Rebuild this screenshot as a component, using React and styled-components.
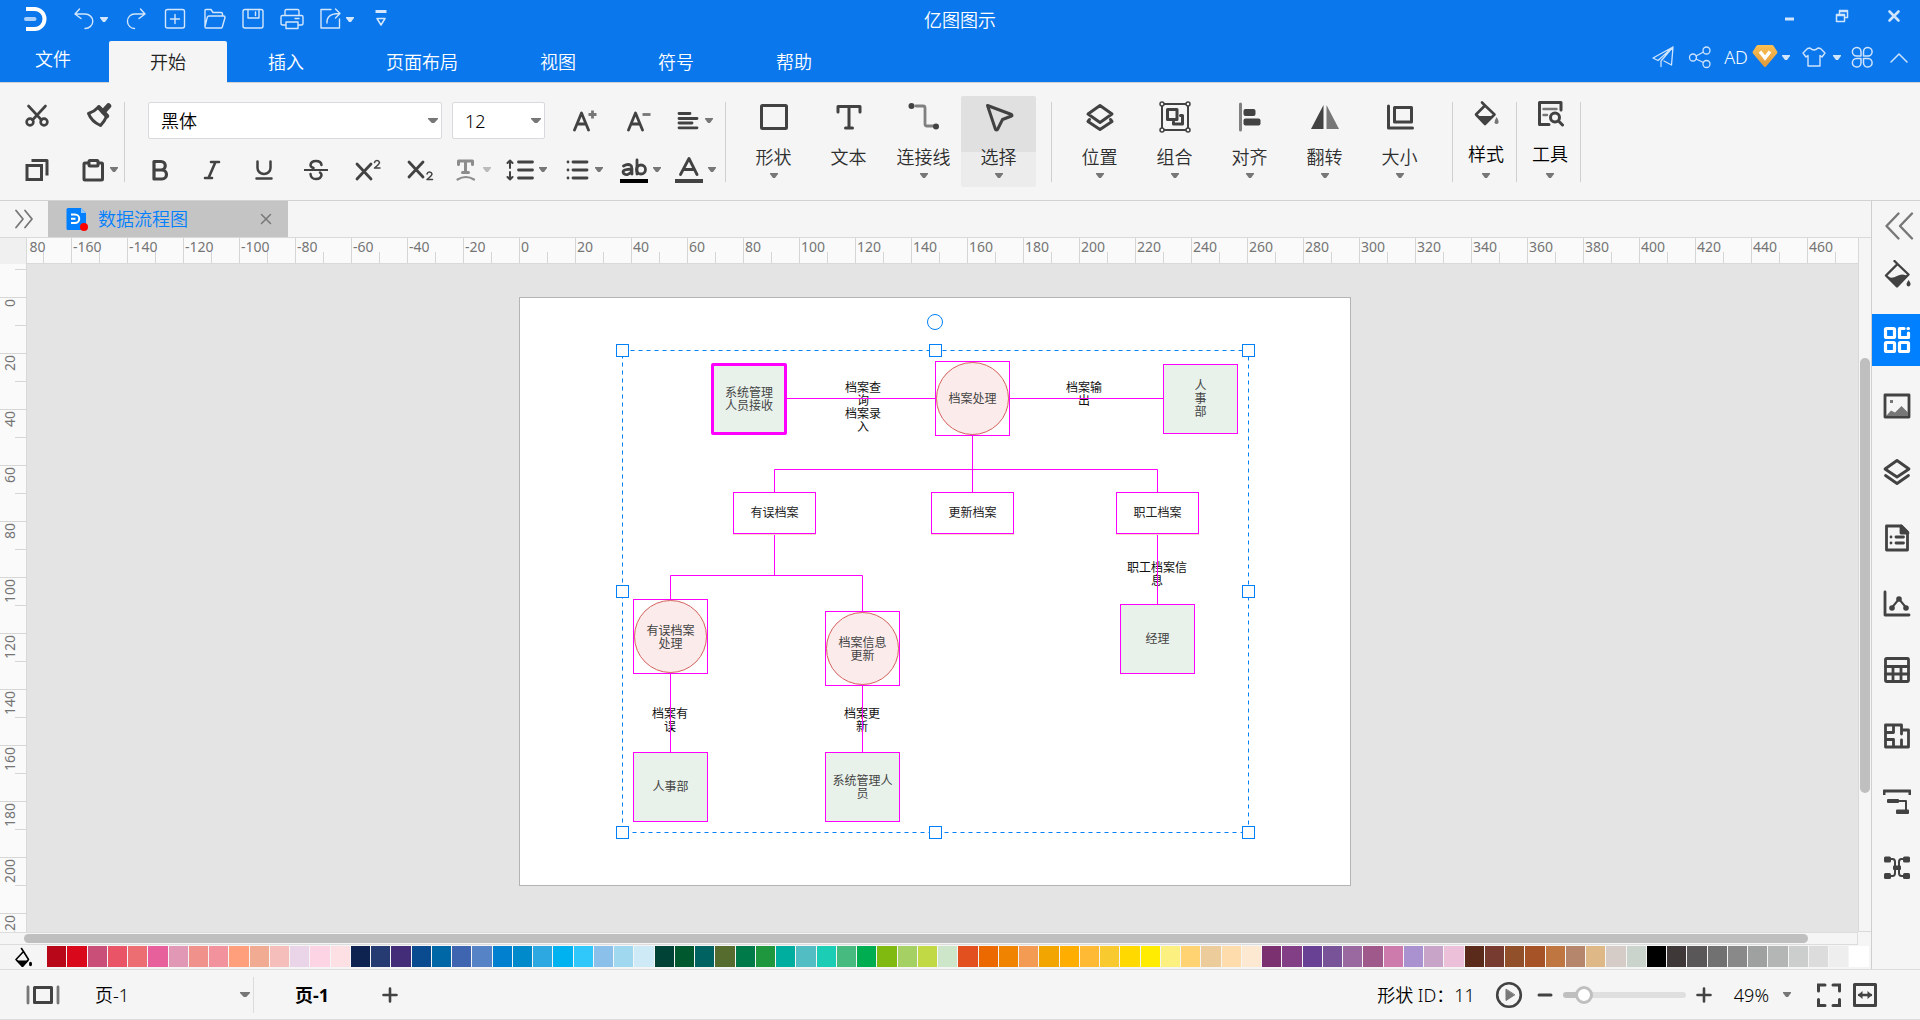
import React, { useState } from "react";
import styled, { createGlobalStyle, css } from "styled-components";

const GlobalStyle = createGlobalStyle`
  *, *::before, *::after { box-sizing: border-box; }
  body {
    margin: 0;
    background: #f5f5f5;
    color: #000;
    font: 350 18px/24px "Noto Sans", "Noto Sans CJK SC", sans-serif;
  }
  button, select, input { font: inherit; color: inherit; }
  button { border: 0; padding: 0; margin: 0; background: none; cursor: pointer; }
  svg { display: block; flex: none; }
`;

/* ---------- icons ---------- */

const Svg = ({ w = 24, h = w, sw = 2, fill = "none", children }) => (
  <svg width={w} height={h} viewBox={`0 0 ${w} ${h}`} fill={fill} stroke="currentColor" strokeWidth={sw}
    strokeLinecap="round" strokeLinejoin="round" aria-hidden="true">
    {children}
  </svg>
);
const solid = { fill: "currentColor", stroke: "none" };

const CaretSvg = styled.svg`
  fill: ${(p) => p.$color || "#777"};
`;
const Caret = ({ color, size = 8 }) => (
  <CaretSvg $color={color} width={size} height="5" viewBox="0 0 8 5" preserveAspectRatio="none" aria-hidden="true">
    <path d="M0 0h8v1L5 5H3L0 1z" />
  </CaretSvg>
);

const thin = 1.4;
const Logo = () => (
  <Svg sw={4}>
    <path d="M3 2h8.500a10 10 0 0 1 0 20H3" strokeLinecap="butt" />
    <path d="M3 12h8.500" stroke="#a9d0fa" />
  </Svg>
);
const Undo = () => (<Svg sw={thin}><path d="M7.500 3 3 8l6 4.500M3 8h10a7 6.500 0 0 1 0 14.500" transform="translate(0 -1)" /></Svg>);
const Redo = () => (<Svg sw={thin}><path d="M16.500 2 21 7l-6 4.500M21 7H10.500a7 7.200 0 0 0 0 14.500" /></Svg>);
const NewDoc = () => (<Svg sw={thin}><rect x="2.500" y="2.500" width="19" height="18.500" rx="2" /><path d="M12 7.500v9M7.500 12h9" /></Svg>);
const Folder = () => (
  <Svg sw={thin}><path d="M3 20V3.500q0-1 1-1h5l2 3h8q1.500 0 1.500 1.500v2M3 20q0 1 1 1h15q1 0 1.300-1L23 10.500q0-1.500-1.300-1.500H7q-1.300 0-1.700 1.200L3 19.500" /></Svg>
);
const Save = () => (<Svg sw={thin}><rect x="2" y="2.500" width="20" height="18.500" rx="2" /><path d="M7 2.500v8.500h11V2.500M14.500 5v3.500" /></Svg>);
const Printer = () => (
  <Svg sw={thin}><path d="M5 8.500V4q0-1.500 1.500-1.500h11Q19 2.500 19 4v4.500M5 18H2.500q-1.500 0-1.500-1.500v-6.500q0-1.500 1.500-1.500h19Q23 8.500 23 10v6.500q0 1.500-1.500 1.500H19M6 15h12v6.500H6zM15 11.500h4" /></Svg>
);
const ShareOut = () => (<Svg sw={thin}><path d="M13 2.500H3V21h18.500V12M9 16q-.5-9.500 12-9.500M17.500 2 22 6.500 17.500 11" /></Svg>);
const Customize = () => (<Svg sw={1.500}><path d="M6.500 4.500h11" strokeWidth="3" strokeLinecap="butt" /><path d="M8 11.500l4 6.500 4-6.500z" fill="none" /></Svg>);

const Minimize = () => (<Svg w={16}><path d="M3 11h9" strokeWidth="3" strokeLinecap="butt" /></Svg>);
const Restore = () => (
  <Svg w={16} sw={1.500}><path d="M5.500 6V2.500h8v7H10M5.500 3.500h8M2.500 6.500h8v7h-8zM2.500 7.500h8" strokeLinecap="butt" /></Svg>
);
const CloseWin = () => (<Svg w={16} sw={2.600}><path d="M3.500 3.500l9 9M12.500 3.500l-9 9" /></Svg>);

const Plane = () => (<Svg sw={1.300}><path d="M22 2 2 13l5 2.500L22 2l-1.500 18-7.500-4M10 21.500V16L22 2" /></Svg>);
const Share = () => (<Svg sw={1.300}><circle cx="5" cy="12.500" r="3.500" /><circle cx="18.500" cy="5.500" r="3.500" /><circle cx="18.500" cy="19" r="3.500" /><path d="M8 11l7.500-4M8 14l7.500 3.500" /></Svg>);
const Diamond = () => (
  <svg width="26" height="24" viewBox="0 0 26 24" aria-hidden="true">
    <defs><linearGradient id="gem" x1="0" y1="0" x2="0" y2="1"><stop offset="0" stopColor="#fbc052" /><stop offset="1" stopColor="#e0983c" /></linearGradient></defs>
    <path d="M6 0h14q1 0 1.500.800L25.200 6.500q.6 1-.2 2L14 21.500q-1 1-2 0L1 8.500q-.8-1-.2-2L4.500.800Q5 0 6 0z" fill="url(#gem)" />
    <path d="M8 6.500l5 6.500 5-6.500" fill="none" stroke="#fff" strokeWidth="3.400" />
  </svg>
);
const Shirt = () => (<Svg sw={1.400}><path d="M8 3q4 4 8 0l2.500.500L23 8l-3 4-2-1.500V21H6V10.500L4 12 1 8l4.500-4.500z" /></Svg>);
const Clover = () => (
  <Svg sw={1.500}>
    <path d="M11 11V6.500A4.300 4.300 0 1 0 6.500 11zM13.500 11H18A4.300 4.300 0 1 0 13.500 6.500zM11 13.500H6.500A4.300 4.300 0 1 0 11 18zM13.500 13.500V18A4.300 4.300 0 1 0 18 13.500z" />
  </Svg>
);
const ChevronUp = () => (<Svg sw={1.500}><path d="M4 17l8-8 8 8" /></Svg>);

const Scissors = () => (<Svg sw={2.600}><path d="M3.500 2 16.500 16M20.500 2l-13 14" /><circle cx="5" cy="18" r="3.400" /><circle cx="19" cy="18" r="3.400" /></Svg>);
const Brush = () => (
  <Svg w={26} sw={3}>
    <path d="M12.500 4Q8.500 8.500 2.500 10.500 5.500 18.500 14.500 22.500q4.500-5 6-9z" />
    <path d="M13 4.500l8 8.500" strokeWidth="4.500" /><path d="M17.500 8.500l5-5.500" strokeWidth="5.500" />
  </Svg>
);
const Copy = () => (<Svg sw={3}><path d="M2 7.500h14.500v14H2z" strokeLinejoin="miter" /><path d="M6.500 2.500h15.500v15" strokeLinecap="butt" /></Svg>);
const Paste = () => (<Svg sw={3}><rect x="3" y="5" width="18.500" height="17" rx="1" /><rect x="8" y="2.500" width="9" height="5.500" rx="1" fill="#f5f5f5" /></Svg>);
const FontUp = () => (<Svg sw={2.800}><path d="M1.500 21 8.500 4l7 17M4.500 15h8" /><path d="M15.500 5.500h8M19.500 1.500v8" stroke="#777" strokeLinecap="butt" /></Svg>);
const FontDown = () => (<Svg sw={2.800}><path d="M1.500 21 8.500 4l7 17M4.500 15h8" /><path d="M15.500 5.500h8" stroke="#777" strokeLinecap="butt" /></Svg>);
const AlignText = () => (<Svg sw={2.800}><path d="M3 4.500h11M3 9.500h18M3 14h13M3 18.800h18" /></Svg>);
const Bold = () => (<Svg sw={3.200}><path d="M6 3.500h7a4 4 0 0 1 0 8.500H6zM6 12h8a4.300 4.300 0 0 1 0 9H6z" /></Svg>);
const Italic = () => (<Svg sw={2.600}><path d="M11 4h8M5 20h7M15.500 4l-7 16" /></Svg>);
const Underline = () => (<Svg sw={2.500}><path d="M5.500 3.500V10a6.500 6 0 0 0 13 0V3.500M4.500 20.500h15" /></Svg>);
const Strike = () => (<Svg sw={2.500}><path d="M17.500 7q-.5-4-5.500-4T6.500 7q0 2 3 3M6.500 16q.5 5 5.500 5t5.500-4q0-1.500-1.500-2.500" /><path d="M.5 12h23" strokeWidth="2" /></Svg>);
const Sup = () => (<Svg w={28} h={24} sw={2.800}><path d="M3 6l14 15M17 6 3 21" /><path d="M20.500 4.500q.5-2 2.500-2t2.500 2q0 1.500-5 5.500h5.500" strokeWidth="1.500" /></Svg>);
const Sub = () => (<Svg w={28} h={24} sw={2.800}><path d="M3 4l14 15M17 4 3 19" /><path d="M21 16q.5-2 2.500-2t2.500 2q0 1.500-5 5.500h5.500" strokeWidth="1.500" /></Svg>);
const TextArc = () => (<Svg sw={3} ><g stroke="#8c8c8c"><path d="M4.500 6.500V3h14v3.500M11.500 3v11M8.500 14.500h6" strokeWidth="3" /><path d="M3.500 21.500q8.500-5 16.500 0" strokeWidth="2.200" /></g></Svg>);
const LineSpacing = () => (<Svg w={28} h={24} sw={2.800}><path d="M12.500 4h14M12.500 12h14M12.500 20h14" /><path d="M4 2.500v7.500M4 14v7.500M1.500 5 4 2.500 6.500 5M1.500 19 4 21.500 6.500 19" strokeWidth="2" /></Svg>);
const Bullets = () => (<Svg sw={2.800}><path d="M7 4h14M7 12h14M7 20h14" /><path d="M2 4h.01M2 12h.01M2 20h.01" /></Svg>);
const Highlight = () => (
  <Svg w={28} h={26} sw={2.800}>
    <path d="M3.500 9q4.500-2.800 7.500-.5 1 1 1 8.500M12 12q-9 .3-9 3 1 3.500 5 2.300 4-1.500 4-5.300M17 3v14" />
    <circle cx="21" cy="12.500" r="4.500" /><path d="M0 22h28v4H0z" fill="#000" stroke="none" />
  </Svg>
);
const FontColor = () => (<Svg w={28} h={26} sw={2.800}><path d="M5.500 17.500 14 1.500l8 16M8.500 12.500h11" /><path d="M0 22h28v4H0z" {...solid} /></Svg>);

const ShapeIcon = () => (<Svg w={32} sw={3}><rect x="3.500" y="4.500" width="25" height="23" rx="1" /></Svg>);
const TextIcon = () => (<Svg w={32} sw={3}><path d="M5 11V5.500h22V11M16 5.500v21M12.500 27h7" /></Svg>);
const ConnectorIcon = () => (
  <Svg w={32} sw={2.800}><path d="M8 5h7q2 0 2 2v16q0 2 2 2h7" stroke="#808080" /><circle cx="3.500" cy="5" r="3" {...solid} /><circle cx="28" cy="25.500" r="3" {...solid} /></Svg>
);
const SelectIcon = () => (<Svg w={32} sw={3}><path d="M4.500 4.500 28.500 13.500q1 1 0 1.500l-9 3.500-5 10q-1 1-2 0z" /></Svg>);
const LayerIcon = () => (<Svg w={32} sw={3}><path d="M16 4.500 28 13l-12 8.500L4 13zM5.500 18.500 4 20.500l12 8 12-8-1.500-2" /></Svg>);
const GroupIcon = () => (
  <Svg w={32} sw={2}>
    <path d="M3 3h26v26H3z" />
    <g fill="#f5f5f5" strokeWidth="1.500"><circle cx="3" cy="3" r="2" /><circle cx="29" cy="3" r="2" /><circle cx="3" cy="29" r="2" /><circle cx="29" cy="29" r="2" /></g>
    <path d="M8.500 8.500h9.500v10H8.500zM21.500 14.500h2v8.500h-9v-2" strokeWidth="3" />
  </Svg>
);
const AlignIcon = () => (<Svg w={32}><path d="M6.500 3v26" stroke="#808080" strokeWidth="3" /><rect x="9.500" y="8" width="12" height="7" rx="2" {...solid} /><rect x="9.500" y="17.500" width="17" height="7" rx="2" {...solid} /></Svg>);
const FlipIcon = () => (<Svg w={32}><path d="M14.500 4v24H2z" {...solid} /><path d="M17.500 4v24H30z" fill="#777" stroke="none" /></Svg>);
const SizeIcon = () => (<Svg w={32} sw={3}><path d="M4.500 5v22h24" /><path d="M10.500 6.500h17v14.500h-17z" /></Svg>);
const FillIcon = () => (
  <Svg w={28} sw={2.600}><path d="M10 2.500l3 3M13 5.500 4 14.500l9 9.500 9.500-9.500z" /><path d="M5 16h17L13 25z" {...solid} /><path d="M24.500 17q2.500 3.500 2 5.500-.5 1.500-2 1.500t-2-1.500q0-2 2-5.500z" fill="#777" stroke="none" /></Svg>
);
const ToolsIcon = () => (
  <Svg w={28} sw={3}><path d="M25 10V2.500H3.500v22H13" /><path d="M7.500 9h13M7.500 15h3.500" stroke="#777" strokeWidth="2.500" /><circle cx="19" cy="17.500" r="4.500" /><path d="M22.500 21l4 4" /></Svg>
);

const ChevronsRight = () => (<Svg w={20} sw={1.800}><path d="M2 1.500 9 10l-7 8.500M11 1.500 18 10l-7 8.500" /></Svg>);
const DocIcon = () => (
  <svg width="22" height="24" viewBox="0 0 22 24" aria-hidden="true">
    <path d="M2 1h13l5 5v17H2q-1.500 0-1.500-1.500v-19Q.5 1 2 1z" fill="#0080ff" /><path d="M15 1l5 5h-5z" fill="#8cc6ff" />
    <path d="M5 7.500h4a4.200 4.200 0 0 1 0 8.500H5M5 11.800h4.500" fill="none" stroke="#fff" strokeWidth="2" />
    <circle cx="18" cy="20" r="4" fill="#f00" />
  </svg>
);
const CloseTab = () => (<Svg w={12} sw={1.500}><path d="M1.500 1.500l9 9M10.500 1.500l-9 9" /></Svg>);

const ChevronsLeft = () => (<Svg w={30} sw={2.400}><path d="M14.500 2.500 2.500 15l12 12.500M28 2.500 16 15l12 12.500" /></Svg>);
const SideFill = () => (
  <Svg w={28} sw={2.400}><path d="M11.500 1l3 3M14.500 4 3 15.500 14 26.500l11.500-12z" /><path d="M4 16.500q5 2.500 10-.5t11 0L14 27z" {...solid} /><path d="M25.500 20q2.500 3 2 4.500-.5 2-2 2t-2-2q0-1.500 2-4.500z" {...solid} /></Svg>
);
const SideGrid = () => (
  <Svg w={28} sw={3.200}><rect x="2.500" y="2.500" width="9" height="9" rx="1" /><rect x="2.500" y="16.500" width="9" height="9" rx="1" /><rect x="16.500" y="16.500" width="9" height="9" rx="1" /><path d="M21 2.500h-4.500v9h9V7M25 2.500h.5" /></Svg>
);
const SideImage = () => (<Svg w={28} sw={2.800}><path d="M2 3h24v22H2z" /><path d="M4 23l4-4.500 4 2 6.500-6.500 6.500 6.500V24H4zM7 8h3v3H7z" fill="#777" stroke="none" /></Svg>);
const SideLayers = () => (<Svg w={28} sw={2.800}><path d="M14 2.500l12 8.500-12 8L2 11zM2.500 17.500l11.500 8 11.500-8" /></Svg>);
const SideDoc = () => (<Svg w={28} sw={2.800}><path d="M3.500 2h15l6 6v18h-21z" /><path d="M18 2v7h7z" fill="currentColor" /><path d="M8 13h.01M8 19h.01M13 13h7.500M13 19h7.500" /></Svg>);
const SideChart = () => (<Svg w={28} sw={2.800}><path d="M2 2v23h24" /><path d="M9 17.500 16 9l7 8.500" strokeWidth="2" /><circle cx="9" cy="18" r="2.800" {...solid} /><circle cx="16" cy="9" r="2.800" {...solid} /><circle cx="23" cy="18" r="2.800" {...solid} /></Svg>);
const SideTable = () => (<Svg w={28} sw={2.800}><rect x="2.500" y="2.500" width="23" height="23" rx="1" /><path d="M2.500 10.500h23M2.500 18h23M10 10.500v15M18 10.500v15" /></Svg>);
const SidePlan = () => (<Svg w={28} sw={2.800}><path d="M2.500 3h16v5h7v17h-23zM10.500 3v7.500h-8M18.500 8v4M2.500 17.500h8V25M18.500 25v-7" /></Svg>);
const SideFlow = () => (<Svg w={28} sw={2}><path d="M1 7V3h26v4" strokeWidth="3" strokeLinecap="butt" /><path d="M15 13h8v10" /><rect x="4" y="11" width="12" height="4" rx="1" {...solid} /><rect x="13" y="21.500" width="13" height="4.500" rx="1" {...solid} /></Svg>);
const SideMind = () => (
  <Svg w={28} sw={2}><path d="M7 5h2.500Q12 5 12 8v11q0 3-2.500 3H7M21 5h-2.500Q16 5 16 8v11q0 3 2.500 3H21" />
    <g {...solid}><rect x="1" y="2.500" width="7" height="6" rx="1.500" /><rect x="20" y="2.500" width="7" height="6" rx="1.500" /><rect x="1" y="19" width="7" height="6" rx="1.500" /><rect x="20" y="19" width="7" height="6" rx="1.500" /><rect x="10" y="11.500" width="8" height="4.500" rx="1" /></g></Svg>
);

const PaletteFill = () => (<Svg w={20} sw={1.600}><path d="M8.500 1.500l2 3L3 12.500l6.500 7 6-7-5-8" /><path d="M3 13.500h13L9.500 20z" {...solid} /><ellipse cx="17.500" cy="17" rx="1.500" ry="2.200" {...solid} /></Svg>);
const PagesIcon = () => (<Svg w={34} h={20} sw={3}><path d="M8.500 2.500h17v15h-17z" /><path d="M2 2v16M32 2v16" stroke="#777" strokeWidth="2.800" /></Svg>);
const PlusIcon = () => (<Svg w={16} sw={2.600}><path d="M8 1.500v13M1.500 8h13" /></Svg>);
const MinusIcon = () => (<Svg w={16} sw={3}><path d="M2 8h12" /></Svg>);
const PlayIcon = () => (<Svg w={28} sw={2.600}><circle cx="14" cy="14" r="11.800" /><path d="M11 8.500v11l8.500-5.500z" fill="#777" stroke="#777" strokeWidth="1" /></Svg>);
const FullIcon = () => (<Svg w={26} sw={3}><path d="M9 3H2.500v6M17 3h6.500v6M9 23.500H2.500v-6M17 23.500h6.500v-6" strokeLinejoin="miter" /></Svg>);
const FitIcon = () => (<Svg w={26} sw={3}><path d="M2.500 2.500h21v21h-21z" /><path d="M7 13h12" strokeWidth="2.400" /><path d="M10.500 9v8L6 13zM15.500 9v8l4.500-4z" {...solid} /></Svg>);

/* ---------- header ---------- */

const Shell = styled.div`
  display: flex;
  flex-direction: column;
  min-height: 100vh;
`;
const Header = styled.header`
  background: #0a77ec;
  color: #fff;
  border-bottom: 1px solid #d2d2d2;
`;
const TitleBar = styled.div`
  display: grid;
  grid-template-columns: 1fr auto 1fr;
  height: 41px;
`;
const QuickAccess = styled.div`
  display: flex;
  align-items: center;
  height: 38px;
  padding-left: 23px;
  color: #d3e6fc;
`;
const LogoMark = styled.span`
  color: #fff;
  margin-right: 16px;
`;
const BarButton = styled.button`
  display: flex;
  align-items: center;
  justify-content: center;
  gap: ${(p) => p.$gap || 4}px;
  width: ${(p) => p.$w || 39}px;
  height: 32px;
`;
const Title = styled.h1`
  margin: 0;
  font-size: 18px;
  font-weight: 350;
  line-height: 40px;
`;
const WindowButtons = styled.div`
  display: flex;
  justify-content: flex-end;
  color: #cfe4fd;
`;
const MenuRow = styled.div`
  display: flex;
  justify-content: space-between;
  height: 41px;
`;
const Menu = styled.nav`
  display: flex;
`;
const MenuTab = styled.button`
  height: 41px;
  padding: 0 41px;
  border-radius: 2px 2px 0 0;
  ${(p) => p.$active && css`
    background: #f5f5f5;
    color: #222;
    margin-bottom: -1px;
    height: 42px;
  `}
`;
const FileTab = styled.button`
  width: 109px;
  height: 35px;
  padding-right: 3px;
`;
const Account = styled.div`
  display: flex;
  color: #cfe4fd;
`;
const UserName = styled.span`
  color: #fff;
`;

/* ---------- ribbon ---------- */

const Ribbon = styled.section`
  display: flex;
  align-items: flex-start;
  height: 118px;
  border-bottom: 1px solid #d2d2d2;
  color: #424242;
`;
const Separator = styled.i`
  width: 1px;
  height: 80px;
  margin: 19px ${(p) => p.$after || 0}px 0 ${(p) => p.$before || 0}px;
  background: #cfcfcf;
`;
const ClipboardGroup = styled.div`
  display: grid;
  grid-template-columns: 50px 50px;
  gap: 17px 12px;
  padding: 14px 0 0 12px;
`;
const FontGroup = styled.div`
  display: flex;
  flex-direction: column;
  gap: 12px;
  padding: 19px 0 0 9px;
`;
const FontRow = styled.div`
  display: flex;
  padding-left: ${(p) => (p.$inset ? 14 : 0)}px;
`;
const IconButton = styled.button`
  display: flex;
  align-items: center;
  justify-content: center;
  gap: 5px;
  width: ${(p) => p.$w || 50}px;
  height: 37px;
`;
const SelectBox = styled.label`
  position: relative;
  display: flex;
  align-items: center;
  width: ${(p) => p.$w}px;
  margin-right: ${(p) => p.$gap}px;
  ${CaretSvg} {
    position: absolute;
    right: 4px;
    pointer-events: none;
  }
`;
const Select = styled.select`
  appearance: none;
  width: 100%;
  height: 37px;
  padding: 0 13px 0 12px;
  border: 1px solid #d9d9df;
  border-radius: 2px;
  background: #fff;
  color: #000;
`;
const ToolButton = styled.button`
  display: flex;
  flex-direction: column;
  align-items: center;
  width: ${(p) => (p.$compact ? 63 : 75)}px;
  height: 91px;
  margin-top: 13px;
  padding: ${(p) => (p.$compact ? "2px 0 0 3px" : "5px 0 0")};
  border-radius: 2px;
  color: ${(p) => (p.$compact ? "#000" : "#2e2e2e")};
  background: ${(p) => (p.$active ? "linear-gradient(#e0e0e0 56px, #ececec 56px)" : "none")};
`;
const ToolIcon = styled.span`
  display: flex;
  align-items: center;
  height: 32px;
  margin-bottom: 12px;
  color: #424242;
`;
const ToolCaret = styled.span`
  height: 5px;
  margin-top: ${(p) => (p.$compact ? 7 : 4)}px;
  visibility: ${(p) => (p.$hidden ? "hidden" : "visible")};
`;

/* ---------- workspace ---------- */

const Main = styled.main`
  display: flex;
  flex: 1;
`;
const Workspace = styled.div`
  display: flex;
  flex-direction: column;
  flex: 1;
  min-width: 0;
`;
const DocBar = styled.div`
  display: flex;
  height: 37px;
  border-bottom: 1px solid #d9d9d9;
  color: #777;
`;
const DocExpand = styled.button`
  display: grid;
  place-items: center;
  width: 48px;
`;
const DocTab = styled.div`
  display: flex;
  align-items: center;
  gap: 10px;
  width: 240px;
  padding: 0 16px 0 18px;
  background: #c4c4c4;
`;
const DocName = styled.button`
  flex: 1;
  text-align: left;
  color: #0080ff;
`;
const Editor = styled.div`
  display: grid;
  flex: 1;
  grid-template-columns: 27px minmax(0, 1fr) 13px;
  grid-template-rows: 26px minmax(0, 1fr);
`;
const Corner = styled.div`
  background: #f0f0f0;
  border-right: 1px solid #d9d9d9;
`;
const RulerX = styled.div`
  display: flex;
  overflow: hidden;
  background: #fafafa;
  border-bottom: 1px solid #d9d9d9;
  > :first-child { margin-left: -12px; }
`;
const RulerY = styled.div`
  position: relative;
  overflow: hidden;
  background: #fafafa;
  border-right: 1px solid #d9d9d9;
`;
const RulerYScale = styled.div`
  position: absolute;
  top: -23px;
  left: 0;
  right: 0;
`;
const markText = css`
  color: #757575;
  font-size: 14px;
  font-weight: 400;
`;
const MarkX = styled.span`
  ${markText}
  flex: none;
  width: 56px;
  padding-left: 1px;
  line-height: 17px;
  border-left: 1px solid #d6d6d6;
  background: linear-gradient(#d6d6d6, #d6d6d6) 27px 100% / 1px 11px no-repeat;
`;
const MarkY = styled.div`
  ${markText}
  height: 56px;
  padding-top: 1px;
  line-height: 20px;
  border-top: 1px solid #d6d6d6;
  background: linear-gradient(#d6d6d6, #d6d6d6) 100% 27px / 11px 1px no-repeat;
  span {
    display: block;
    width: 20px;
    writing-mode: vertical-rl;
    transform: rotate(180deg);
  }
`;
const ScrollY = styled.div`
  grid-column: 3;
  grid-row: 1 / 3;
  padding: 120px 1px 0;
  border-left: 1px solid #d9d9d9;
  border-bottom: 1px solid #d9d9d9;
  background: #f5f5f5;
  &::before {
    content: "";
    display: block;
    height: 76%;
    border-radius: 5px;
    background: #bfbfbf;
  }
`;
const ScrollX = styled.div`
  height: 13px;
  margin-right: 13px;
  padding: 1px 49px 1px 24px;
  border: solid #dcdcdc;
  border-width: 1px 1px 1px 0;
  background: #f5f5f5;
  &::before {
    content: "";
    display: block;
    height: 9px;
    border-radius: 5px;
    background: #bfbfbf;
  }
`;
const Canvas = styled.div`
  position: relative;
  overflow: hidden;
  min-height: 660px;
  background: #e4e4e4;
`;
const Page = styled.div`
  position: absolute;
  left: 493px;
  top: 34px;
  width: 830px;
  height: 587px;
  background: #fff;
  box-shadow: 0 0 0 1px #b4b4b4;
`;
const diagramText = css`
  font: 400 12px/13px "Noto Sans CJK SC", sans-serif;
  text-align: center;
  white-space: pre-line;
`;
const Node = styled.div`
  ${diagramText}
  position: absolute;
  display: grid;
  place-items: center;
  left: ${(p) => p.$x}px;
  top: ${(p) => p.$y}px;
  width: ${(p) => p.$w}px;
  height: ${(p) => p.$h}px;
  padding-bottom: 3px;
  border: ${(p) => (p.$key ? 3 : 1)}px solid #f0f;
  border-radius: ${(p) => (p.$key ? 2 : 0)}px;
  color: #444;
  background: #e8f1ea;
  ${(p) => p.$kind === "box" && css`
    color: #222;
    background: #fff;
    box-shadow: 0 1px #f3dcc4;
  `}
  ${(p) => p.$kind === "circle" && css`
    padding-bottom: 0;
    background: #fff;
  `}
`;
const Disc = styled.div`
  display: grid;
  place-items: center;
  width: 100%;
  height: 100%;
  padding-bottom: 2px;
  border: 1px solid #d4605c;
  border-radius: 50%;
  background: #fbebea;
`;
const LinkLabel = styled.div`
  ${diagramText}
  position: absolute;
  left: ${(p) => p.$x - 40}px;
  top: ${(p) => p.$y}px;
  width: 80px;
  color: #111;
`;
const Layer = styled.svg`
  position: absolute;
  inset: 0;
`;
const PaletteBar = styled.div`
  display: flex;
  height: 24px;
  padding: 1px 1px 1px 13px;
`;
const PaletteButton = styled.button`
  width: 34px;
`;
const Swatches = styled.div`
  display: flex;
  flex: 1;
`;
const Swatch = styled.button`
  flex: 1;
  height: 21px;
  border-right: 1px solid #f5f5f5;
  background: ${(p) => p.$color};
`;

const Sidebar = styled.aside`
  display: flex;
  flex-direction: column;
  width: 49px;
  border-left: 1px solid #cfcfcf;
  color: #424242;
`;
const Collapse = styled.button`
  display: grid;
  place-items: start center;
  height: 47px;
  padding: 10px 0 0 6px;
  color: #777;
`;
const SideButton = styled.button`
  display: grid;
  place-items: center;
  height: 52px;
  margin-bottom: 14px;
  padding-left: 1px;
  ${(p) => p.$active && css`
    background: #0080ff;
    color: #fff;
  `}
`;

/* ---------- status bar ---------- */

const StatusBar = styled.footer`
  display: flex;
  align-items: center;
  height: 51px;
  padding-right: 37px;
  border: solid #dcdcdc;
  border-width: 1px 0;
  color: #424242;
`;
const StatusButton = styled.button`
  display: grid;
  place-items: center;
  width: ${(p) => p.$w}px;
  height: 36px;
`;
const PageSelect = styled.select`
  appearance: none;
  width: 100%;
  padding: 0 10px;
  height: 36px;
  border: 0;
  border-right: 1px solid #dcdcdc;
  background: none;
  color: #000;
`;
const PageTab = styled.button`
  margin-left: 41px;
  font-weight: 700;
  color: #000;
`;
const StatusText = styled.span`
  margin-left: auto;
  margin-right: 14px;
  color: #000;
`;
const ZoomButton = styled.button`
  display: flex;
  align-items: center;
  gap: 14px;
  margin: 0 20px 0 14px;
  color: #000;
`;
const ZoomRange = styled.input`
  appearance: none;
  width: 123px;
  height: 6px;
  margin: 0 2px;
  border-radius: 3px;
  background: linear-gradient(90deg, #bfbfbf 18px, #dfdfdf 18px);
  &::-webkit-slider-thumb {
    appearance: none;
    width: 18px;
    height: 18px;
    border: 3px solid #bfbfbf;
    border-radius: 50%;
    background: #fff;
  }
`;

/* ---------- data ---------- */

const TABS = ["开始", "插入", "页面布局", "视图", "符号", "帮助"];
const TOOLS = [
  ["形状", ShapeIcon], ["文本", TextIcon, true], ["连接线", ConnectorIcon], ["选择", SelectIcon],
];
const ARRANGE = [
  ["位置", LayerIcon], ["组合", GroupIcon], ["对齐", AlignIcon], ["翻转", FlipIcon], ["大小", SizeIcon],
];
const SIDE = [
  ["填充", SideFill], ["符号库", SideGrid], ["图片", SideImage], ["图层", SideLayers], ["文档", SideDoc],
  ["图表", SideChart], ["表格", SideTable], ["平面图", SidePlan], ["流程", SideFlow], ["思维导图", SideMind],
];
const MARKS_X = Array.from({ length: 33 }, (_, i) => -180 + i * 20);
const MARKS_Y = Array.from({ length: 13 }, (_, i) => -20 + i * 20);

const NODES = [
  { x: 191, y: 65, w: 76, h: 72, text: "系统管理\n人员接收", main: true },
  { x: 415, y: 63, w: 75, h: 75, text: "档案处理", kind: "circle" },
  { x: 643, y: 66, w: 75, h: 70, text: "人\n事\n部" },
  { x: 213, y: 194, w: 83, h: 42, text: "有误档案", kind: "box" },
  { x: 411, y: 194, w: 83, h: 42, text: "更新档案", kind: "box" },
  { x: 596, y: 194, w: 83, h: 42, text: "职工档案", kind: "box" },
  { x: 113, y: 301, w: 75, h: 75, text: "有误档案\n处理", kind: "circle" },
  { x: 305, y: 313, w: 75, h: 75, text: "档案信息\n更新", kind: "circle" },
  { x: 600, y: 306, w: 75, h: 70, text: "经理" },
  { x: 113, y: 454, w: 75, h: 70, text: "人事部" },
  { x: 305, y: 454, w: 75, h: 70, text: "系统管理人\n员" },
];
const LABELS = [
  [343, 82, "档案查\n询"], [343, 108, "档案录\n入"], [564, 82, "档案输\n出"],
  [637, 262, "职工档案信\n息"], [150, 408, "档案有\n误"], [342, 408, "档案更\n新"],
];
const HANDLES = [
  [102, 52], [415, 52], [728, 52], [102, 293], [728, 293], [102, 534], [415, 534], [728, 534],
];
const COLORS = (
  "b70718 d9091b c94f78 e95466 ec6d72 e75f9b e198b5 f0918c f2929c ff9f7c f0ab92 f6bebb ead5e8 fdd4e3 fde0e4 " +
  "0f2350 253b71 432d78 0a4a8f 0067a6 4065b0 5583c5 0080cf 008acc 2ea8e0 00b2ef 30c8fa 8bc0ea 9fd8ef ceeaf6 " +
  "004236 00582f 006362 566c2e 007a48 1f973f 00ae9f 52bec4 1acdb4 47bb7f 00ae51 80b910 a4d064 c0d944 cde6c9 " +
  "e2501f ec6900 f08300 f39a53 f2a500 ffae00 ffba35 f9c930 ffd900 ffec00 fcf080 ffd372 ebcc9a ffdcac fde8d1 " +
  "7b3070 833f85 684195 785397 9969a0 9f598a cd7bad aa91cf c8a4c9 ecc0d9 " +
  "5a2a1b 773b30 91502a a65427 c07640 b5856c dfb887 d5ccc8 cad4cd " +
  "000000 3f3838 595757 717171 898989 9fa0a0 b4b5b5 cccdcd dcdcdc eeeeee ffffff"
).split(" ");

/* ---------- parts ---------- */

const Tool = ({ label, icon: Icon, compact, active, plain, onClick }) => (
  <ToolButton $compact={compact} $active={active} onClick={onClick}>
    <ToolIcon><Icon /></ToolIcon>
    {label}
    <ToolCaret $compact={compact} $hidden={plain}><Caret /></ToolCaret>
  </ToolButton>
);

const Diagram = () => (
  <Page>
    {LABELS.map(([x, y, text]) => <LinkLabel key={text} $x={x} $y={y}>{text}</LinkLabel>)}
    <Layer width="831" height="587" fill="none" stroke="#f0f">
      <path d="M267 100.500H415M490 100.500H643M452.500 138V194M254.500 194V171.500H637.500V194M254.500 236V277.500M150.500 301V277.500H342.500V313M150.500 376V454M342.500 388V454M637.500 236V306" />
    </Layer>
    {NODES.map((n) => (
      <Node key={`${n.x}-${n.y}`} $x={n.x} $y={n.y} $w={n.w} $h={n.h} $kind={n.kind} $key={n.main}>
        {n.kind === "circle" ? <Disc>{n.text}</Disc> : n.text}
      </Node>
    ))}
    <Layer width="831" height="587" fill="none" stroke="#0080f8">
      <rect x="102.500" y="52.500" width="626" height="482" strokeDasharray="4 4" />
      <g fill="#fff">
        {HANDLES.map(([x, y]) => <rect key={`${x}-${y}`} x={x - 5.5} y={y - 5.5} width="12" height="12" />)}
        <circle cx="415" cy="24" r="7.500" />
      </g>
    </Layer>
  </Page>
);

export default function App() {
  const [tab, setTab] = useState("开始");
  const [tool, setTool] = useState("选择");
  const [panel, setPanel] = useState("符号库");
  const [zoom, setZoom] = useState(12);

  return (
    <Shell>
      <GlobalStyle />
      <Header>
        <TitleBar>
          <QuickAccess>
            <LogoMark><Logo /></LogoMark>
            <BarButton $w={53} aria-label="撤销"><Undo /><Caret color="#d3e6fc" /></BarButton>
            <BarButton aria-label="重做"><Redo /></BarButton>
            <BarButton aria-label="新建"><NewDoc /></BarButton>
            <BarButton aria-label="打开"><Folder /></BarButton>
            <BarButton aria-label="保存"><Save /></BarButton>
            <BarButton aria-label="打印"><Printer /></BarButton>
            <BarButton $w={50} aria-label="导出"><ShareOut /><Caret color="#d3e6fc" /></BarButton>
            <BarButton aria-label="自定义"><Customize /></BarButton>
          </QuickAccess>
          <Title>亿图图示</Title>
          <WindowButtons>
            <BarButton $w={52} aria-label="最小化"><Minimize /></BarButton>
            <BarButton $w={52} aria-label="还原"><Restore /></BarButton>
            <BarButton $w={52} aria-label="关闭"><CloseWin /></BarButton>
          </WindowButtons>
        </TitleBar>
        <MenuRow>
          <Menu>
            <FileTab>文件</FileTab>
            {TABS.map((t) => <MenuTab key={t} $active={t === tab} onClick={() => setTab(t)}>{t}</MenuTab>)}
          </Menu>
          <Account>
            <BarButton $w={37} aria-label="发送"><Plane /></BarButton>
            <BarButton $w={37} aria-label="分享"><Share /></BarButton>
            <BarButton $w={78}><UserName>AD</UserName><Diamond /><Caret color="#cfe4fd" /></BarButton>
            <BarButton $w={50} $gap={7} aria-label="主题"><Shirt /><Caret color="#cfe4fd" /></BarButton>
            <BarButton $w={32} aria-label="应用"><Clover /></BarButton>
            <BarButton $w={42} aria-label="收起功能区"><ChevronUp /></BarButton>
          </Account>
        </MenuRow>
      </Header>

      <Ribbon>
        <ClipboardGroup>
          <IconButton aria-label="剪切"><Scissors /></IconButton>
          <IconButton aria-label="格式刷"><Brush /></IconButton>
          <IconButton aria-label="复制"><Copy /></IconButton>
          <IconButton aria-label="粘贴"><Paste /><Caret /></IconButton>
        </ClipboardGroup>
        <Separator />
        <FontGroup>
          <FontRow $inset>
            <SelectBox $w={294} $gap={10}>
              <Select aria-label="字体" defaultValue="黑体"><option>黑体</option><option>宋体</option></Select>
              <Caret size={10} />
            </SelectBox>
            <SelectBox $w={93} $gap={13}>
              <Select aria-label="字号" defaultValue="12"><option>12</option><option>14</option></Select>
              <Caret size={10} />
            </SelectBox>
            <IconButton $w={54} aria-label="增大字号"><FontUp /></IconButton>
            <IconButton $w={54} aria-label="减小字号"><FontDown /></IconButton>
            <IconButton $w={56} aria-label="对齐方式"><AlignText /><Caret /></IconButton>
          </FontRow>
          <FontRow>
            <IconButton $w={52} aria-label="加粗"><Bold /></IconButton>
            <IconButton $w={52} aria-label="斜体"><Italic /></IconButton>
            <IconButton $w={52} aria-label="下划线"><Underline /></IconButton>
            <IconButton $w={52} aria-label="删除线"><Strike /></IconButton>
            <IconButton $w={52} aria-label="上标"><Sup /></IconButton>
            <IconButton $w={52} aria-label="下标"><Sub /></IconButton>
            <IconButton $w={52} aria-label="文本弧形"><TextArc /><Caret color="#bbb" /></IconButton>
            <IconButton $w={56} aria-label="行距"><LineSpacing /><Caret /></IconButton>
            <IconButton $w={60} aria-label="项目符号"><Bullets /><Caret /></IconButton>
            <IconButton $w={52} aria-label="突出显示"><Highlight /><Caret /></IconButton>
            <IconButton $w={58} aria-label="字体颜色"><FontColor /><Caret /></IconButton>
          </FontRow>
        </FontGroup>
        <Separator $before={1} $after={10} />
        {TOOLS.map(([label, icon, plain]) => (
          <Tool key={label} label={label} icon={icon} plain={plain} active={tool === label} onClick={() => setTool(label)} />
        ))}
        <Separator $before={15} $after={10} />
        {ARRANGE.map(([label, icon]) => <Tool key={label} label={label} icon={icon} />)}
        <Separator $before={15} />
        <Tool label="样式" icon={FillIcon} compact />
        <Separator />
        <Tool label="工具" icon={ToolsIcon} compact />
        <Separator />
      </Ribbon>

      <Main>
        <Workspace>
          <DocBar>
            <DocExpand aria-label="展开面板"><ChevronsRight /></DocExpand>
            <DocTab>
              <DocIcon />
              <DocName>数据流程图</DocName>
              <button aria-label="关闭文档"><CloseTab /></button>
            </DocTab>
          </DocBar>
          <Editor>
            <Corner />
            <RulerX>{MARKS_X.map((m) => <MarkX key={m}>{m}</MarkX>)}</RulerX>
            <ScrollY />
            <RulerY>
              <RulerYScale>{MARKS_Y.map((m) => <MarkY key={m}>{m >= 0 && <span>{m}</span>}</MarkY>)}</RulerYScale>
            </RulerY>
            <Canvas><Diagram /></Canvas>
          </Editor>
          <ScrollX />
          <PaletteBar>
            <PaletteButton aria-label="填充颜色"><PaletteFill /></PaletteButton>
            <Swatches>
              {COLORS.map((c) => <Swatch key={c} $color={`#${c}`} aria-label={`#${c}`} />)}
            </Swatches>
          </PaletteBar>
        </Workspace>
        <Sidebar>
          <Collapse aria-label="收起侧栏"><ChevronsLeft /></Collapse>
          {SIDE.map(([label, Icon]) => (
            <SideButton key={label} aria-label={label} $active={panel === label} onClick={() => setPanel(label)}><Icon /></SideButton>
          ))}
        </Sidebar>
      </Main>

      <StatusBar>
        <StatusButton $w={85} aria-label="页面视图"><PagesIcon /></StatusButton>
        <SelectBox $w={169} $gap={0}>
          <PageSelect aria-label="页面" defaultValue="页-1"><option>页-1</option></PageSelect>
          <Caret size={10} />
        </SelectBox>
        <PageTab>页-1</PageTab>
        <StatusButton $w={122} aria-label="添加页面"><PlusIcon /></StatusButton>
        <StatusText>形状 ID：11</StatusText>
        <StatusButton $w={40} aria-label="播放"><PlayIcon /></StatusButton>
        <StatusButton $w={32} aria-label="缩小"><MinusIcon /></StatusButton>
        <ZoomRange type="range" min="0" max="100" value={zoom} onChange={(e) => setZoom(e.target.value)} aria-label="缩放" />
        <StatusButton $w={32} aria-label="放大"><PlusIcon /></StatusButton>
        <ZoomButton>49%<Caret /></ZoomButton>
        <StatusButton $w={36} aria-label="全屏"><FullIcon /></StatusButton>
        <StatusButton $w={36} aria-label="适合宽度"><FitIcon /></StatusButton>
      </StatusBar>
    </Shell>
  );
}
